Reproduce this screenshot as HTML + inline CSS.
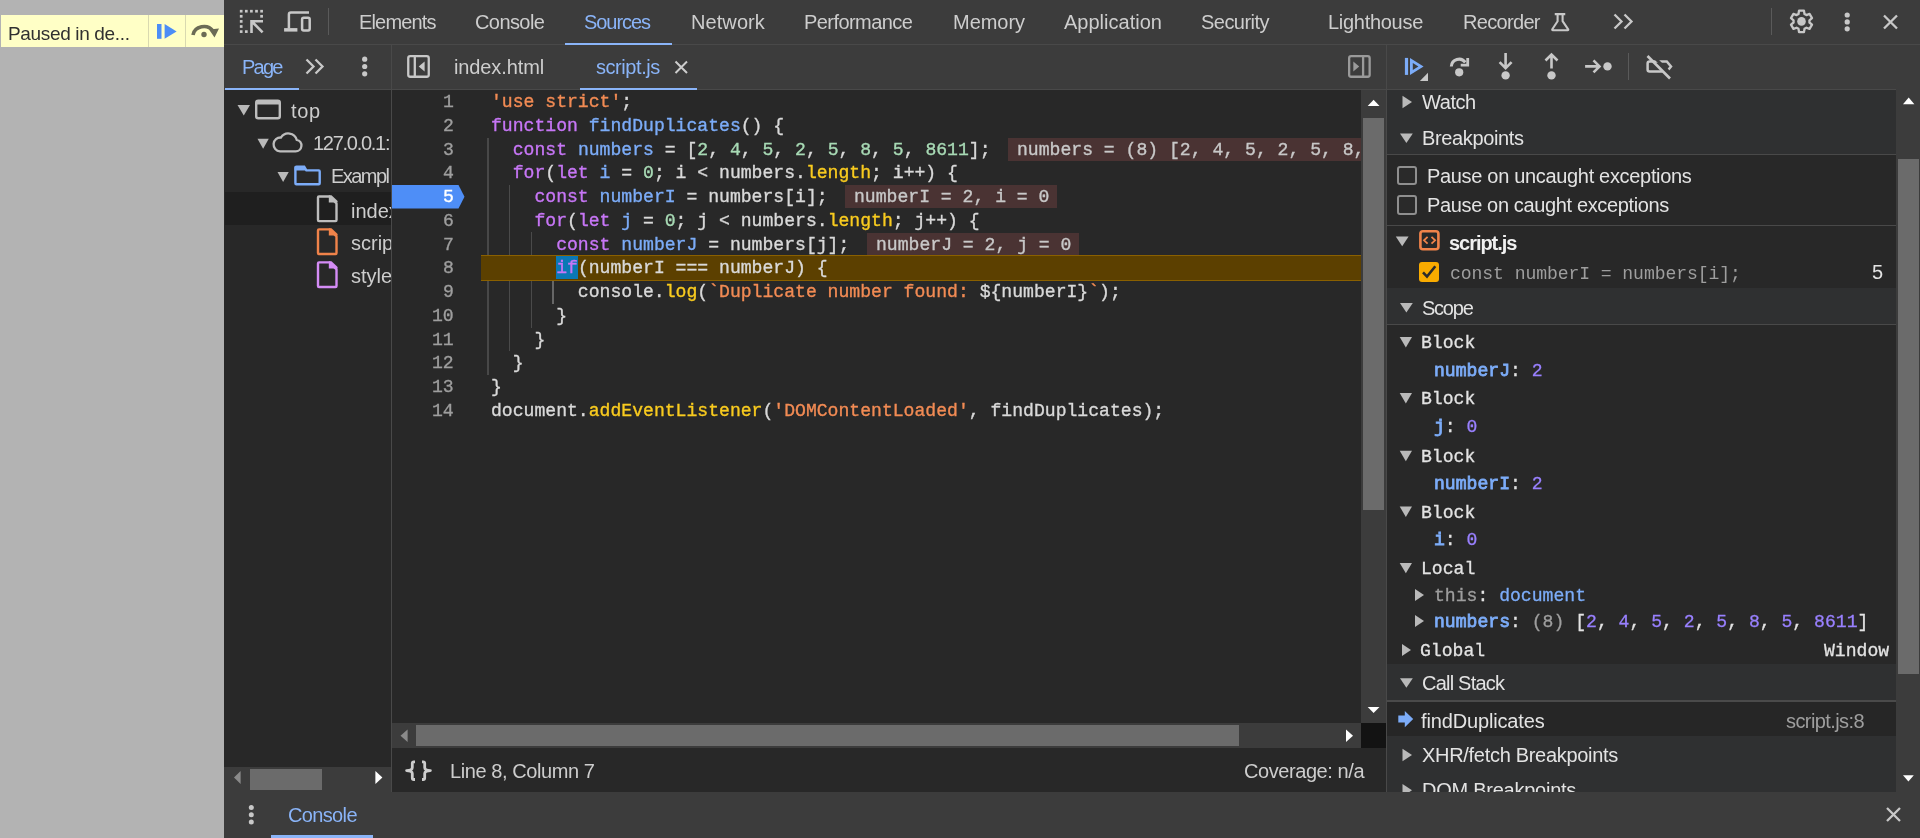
<!DOCTYPE html>
<html><head><meta charset="utf-8"><style>
html,body{margin:0;padding:0;width:1920px;height:838px;overflow:hidden;background:#b3b3b3;}
.b{position:absolute;}
.t{position:absolute;white-space:pre;will-change:transform;}
.code{-webkit-text-stroke:0.35px currentColor;font-family:"Liberation Mono",monospace;font-size:18.1px;line-height:23.75px;height:23.75px;padding-top:1.2px;box-sizing:border-box;}
svg{position:absolute;left:0;top:0;}
</style></head><body>
<div class="b" style="left:0px;top:0px;width:224px;height:838px;background:#b3b3b3;"></div>
<div class="b" style="left:1px;top:15px;width:223px;height:32px;background:#ffffc6;"></div>
<div class="b" style="left:148px;top:15px;width:1px;height:32px;background:#d9d9b0;"></div>
<div class="b" style="left:185px;top:15px;width:1px;height:32px;background:#d9d9b0;"></div>
<div class="t" style="left:8.10px;top:19.61px;font-size:19px;line-height:27px;color:#303030;letter-spacing:-0.346px;font-family:'Liberation Sans', sans-serif;">Paused in de...</div>
<div class="b" style="left:224px;top:0px;width:1696px;height:838px;background:#282828;"></div>
<div class="b" style="left:224px;top:0px;width:1696px;height:44px;background:#3c3c3c;"></div>
<div class="b" style="left:224px;top:44px;width:1696px;height:1px;background:#494949;"></div>
<div class="b" style="left:328px;top:8px;width:1px;height:27px;background:#5a5a5a;"></div>
<div class="t" style="left:358.50px;top:8.26px;font-size:20px;line-height:28px;color:#cdcdcd;letter-spacing:-0.839px;font-family:'Liberation Sans', sans-serif;">Elements</div>
<div class="t" style="left:474.70px;top:8.26px;font-size:20px;line-height:28px;color:#cdcdcd;letter-spacing:-0.579px;font-family:'Liberation Sans', sans-serif;">Console</div>
<div class="t" style="left:584.40px;top:8.26px;font-size:20px;line-height:28px;color:#8ab4f8;letter-spacing:-1.046px;font-family:'Liberation Sans', sans-serif;">Sources</div>
<div class="t" style="left:691.00px;top:8.26px;font-size:20px;line-height:28px;color:#cdcdcd;letter-spacing:0.083px;font-family:'Liberation Sans', sans-serif;">Network</div>
<div class="t" style="left:803.80px;top:8.26px;font-size:20px;line-height:28px;color:#cdcdcd;letter-spacing:-0.560px;font-family:'Liberation Sans', sans-serif;">Performance</div>
<div class="t" style="left:952.50px;top:8.26px;font-size:20px;line-height:28px;color:#cdcdcd;letter-spacing:-0.030px;font-family:'Liberation Sans', sans-serif;">Memory</div>
<div class="t" style="left:1064.40px;top:8.26px;font-size:20px;line-height:28px;color:#cdcdcd;letter-spacing:0.013px;font-family:'Liberation Sans', sans-serif;">Application</div>
<div class="t" style="left:1201.20px;top:8.26px;font-size:20px;line-height:28px;color:#cdcdcd;letter-spacing:-0.536px;font-family:'Liberation Sans', sans-serif;">Security</div>
<div class="t" style="left:1328.40px;top:8.26px;font-size:20px;line-height:28px;color:#cdcdcd;letter-spacing:-0.286px;font-family:'Liberation Sans', sans-serif;">Lighthouse</div>
<div class="t" style="left:1463.00px;top:8.26px;font-size:20px;line-height:28px;color:#cdcdcd;letter-spacing:-0.679px;font-family:'Liberation Sans', sans-serif;">Recorder</div>
<div class="b" style="left:565px;top:43px;width:107px;height:2px;background:#8ab4f8;"></div>
<div class="b" style="left:1771px;top:8px;width:1px;height:27px;background:#5a5a5a;"></div>
<div class="b" style="left:224px;top:45px;width:1696px;height:44px;background:#3c3c3c;"></div>
<div class="b" style="left:224px;top:89px;width:1696px;height:1px;background:#494949;"></div>
<div class="b" style="left:391px;top:45px;width:1px;height:747px;background:#494949;"></div>
<div class="b" style="left:1386px;top:45px;width:1px;height:747px;background:#494949;"></div>
<div class="t" style="left:241.50px;top:53.06px;font-size:20px;line-height:28px;color:#8ab4f8;letter-spacing:-1.750px;font-family:'Liberation Sans', sans-serif;">Page</div>
<div class="b" style="left:225px;top:88px;width:74px;height:2px;background:#8ab4f8;"></div>
<div class="t" style="left:454.40px;top:53.06px;font-size:20px;line-height:28px;color:#cdcdcd;letter-spacing:-0.114px;font-family:'Liberation Sans', sans-serif;">index.html</div>
<div class="t" style="left:596.25px;top:53.06px;font-size:20px;line-height:28px;color:#8ab4f8;letter-spacing:-0.438px;font-family:'Liberation Sans', sans-serif;">script.js</div>
<div class="b" style="left:580px;top:88px;width:117px;height:2px;background:#8ab4f8;"></div>
<div class="b" style="left:1628px;top:53px;width:1px;height:27px;background:#5a5a5a;"></div>
<div class="b" style="left:224px;top:90px;width:167px;height:677px;background:#282828;"></div>
<div class="b" style="left:225px;top:192px;width:166px;height:33px;background:#1f1f1f;"></div>
<div class="b" style="left:0;top:0;width:391px;height:767px;overflow:hidden">
<div class="t" style="left:291.00px;top:96.56px;font-size:20px;line-height:28px;color:#cdcdcd;letter-spacing:0.625px;font-family:'Liberation Sans', sans-serif;">top</div>
<div class="t" style="left:312.50px;top:129.06px;font-size:20px;line-height:28px;color:#cdcdcd;letter-spacing:-1.278px;font-family:'Liberation Sans', sans-serif;">127.0.0.1:</div>
<div class="t" style="left:331.00px;top:162.06px;font-size:20px;line-height:28px;color:#cdcdcd;letter-spacing:-1.550px;font-family:'Liberation Sans', sans-serif;">Exampl</div>
<div class="t" style="left:351.00px;top:196.56px;font-size:20px;line-height:28px;color:#cdcdcd;letter-spacing:0.000px;font-family:'Liberation Sans', sans-serif;">index.html</div>
<div class="t" style="left:351.00px;top:229.46px;font-size:20px;line-height:28px;color:#cdcdcd;letter-spacing:0.000px;font-family:'Liberation Sans', sans-serif;">script.js</div>
<div class="t" style="left:351.00px;top:262.46px;font-size:20px;line-height:28px;color:#cdcdcd;letter-spacing:0.000px;font-family:'Liberation Sans', sans-serif;">style.css</div>
</div>
<div class="b" style="left:224px;top:767px;width:167px;height:25px;background:#3c3c3c;"></div>
<div class="b" style="left:250px;top:769px;width:72px;height:21px;background:#6b6b6b;"></div>
<div class="b" style="left:392px;top:90px;width:969px;height:633px;background:#282828;"></div>
<svg width="1920" height="838" viewBox="0 0 1920 838"><path d="M392 185H458.5L464.5 196.8L458.5 208.6H392Z" fill="#4e8ef7"/></svg>
<div class="t code" style="left:442.63px;top:90.00px;width:10.87px;color:#9e9e9e">1</div>
<div class="t code" style="left:442.63px;top:113.75px;width:10.87px;color:#9e9e9e">2</div>
<div class="t code" style="left:442.63px;top:137.50px;width:10.87px;color:#9e9e9e">3</div>
<div class="t code" style="left:442.63px;top:161.25px;width:10.87px;color:#9e9e9e">4</div>
<div class="t code" style="left:442.63px;top:185.00px;width:10.87px;color:#ffffff">5</div>
<div class="t code" style="left:442.63px;top:208.75px;width:10.87px;color:#9e9e9e">6</div>
<div class="t code" style="left:442.63px;top:232.50px;width:10.87px;color:#9e9e9e">7</div>
<div class="t code" style="left:442.63px;top:256.25px;width:10.87px;color:#9e9e9e">8</div>
<div class="t code" style="left:442.63px;top:280.00px;width:10.87px;color:#9e9e9e">9</div>
<div class="t code" style="left:431.76px;top:303.75px;width:21.74px;color:#9e9e9e">10</div>
<div class="t code" style="left:431.76px;top:327.50px;width:21.74px;color:#9e9e9e">11</div>
<div class="t code" style="left:431.76px;top:351.25px;width:21.74px;color:#9e9e9e">12</div>
<div class="t code" style="left:431.76px;top:375.00px;width:21.74px;color:#9e9e9e">13</div>
<div class="t code" style="left:431.76px;top:398.75px;width:21.74px;color:#9e9e9e">14</div>
<div class="b" style="left:487px;top:138px;width:2px;height:237px;background:#484848;"></div>
<div class="b" style="left:509px;top:185px;width:1px;height:166px;background:#4a4a4a;"></div>
<div class="b" style="left:531px;top:232px;width:1px;height:96px;background:#4a4a4a;"></div>
<div class="b" style="left:552px;top:280px;width:2px;height:24px;background:#666666;"></div>
<div class="b" style="left:481px;top:255px;width:880px;height:26px;background:#5c4000;border-top:1px solid #8a6000;border-bottom:1px solid #8a6000;box-sizing:border-box"></div>
<div class="b" style="left:556px;top:256px;width:22px;height:23px;background:#0a78b5;"></div>
<div class="b" style="left:0;top:0;width:1361px;height:723px;overflow:hidden">
<div class="t code" style="left:491.3px;top:90.00px"><span style="color:#f28b54">&#x27;use strict&#x27;</span><span style="color:#d9d9d9">;</span></div>
<div class="t code" style="left:491.3px;top:113.75px"><span style="color:#c776f6">function</span><span style="color:#d9d9d9"> </span><span style="color:#7cacf8">findDuplicates</span><span style="color:#d9d9d9">() {</span></div>
<div class="t code" style="left:491.3px;top:137.50px"><span style="color:#d9d9d9">  </span><span style="color:#c776f6">const</span><span style="color:#d9d9d9"> </span><span style="color:#7cacf8">numbers</span><span style="color:#d9d9d9"> = [</span><span style="color:#a8dab5">2</span><span style="color:#d9d9d9">, </span><span style="color:#a8dab5">4</span><span style="color:#d9d9d9">, </span><span style="color:#a8dab5">5</span><span style="color:#d9d9d9">, </span><span style="color:#a8dab5">2</span><span style="color:#d9d9d9">, </span><span style="color:#a8dab5">5</span><span style="color:#d9d9d9">, </span><span style="color:#a8dab5">8</span><span style="color:#d9d9d9">, </span><span style="color:#a8dab5">5</span><span style="color:#d9d9d9">, </span><span style="color:#a8dab5">8611</span><span style="color:#d9d9d9">];</span></div>
<div class="t code" style="left:491.3px;top:161.25px"><span style="color:#d9d9d9">  </span><span style="color:#c776f6">for</span><span style="color:#d9d9d9">(</span><span style="color:#c776f6">let</span><span style="color:#d9d9d9"> </span><span style="color:#7cacf8">i</span><span style="color:#d9d9d9"> = </span><span style="color:#a8dab5">0</span><span style="color:#d9d9d9">; i &lt; numbers.</span><span style="color:#f9cb1f">length</span><span style="color:#d9d9d9">; i++) {</span></div>
<div class="t code" style="left:491.3px;top:185.00px"><span style="color:#d9d9d9">    </span><span style="color:#c776f6">const</span><span style="color:#d9d9d9"> </span><span style="color:#7cacf8">numberI</span><span style="color:#d9d9d9"> = numbers[i];</span></div>
<div class="t code" style="left:491.3px;top:208.75px"><span style="color:#d9d9d9">    </span><span style="color:#c776f6">for</span><span style="color:#d9d9d9">(</span><span style="color:#c776f6">let</span><span style="color:#d9d9d9"> </span><span style="color:#7cacf8">j</span><span style="color:#d9d9d9"> = </span><span style="color:#a8dab5">0</span><span style="color:#d9d9d9">; j &lt; numbers.</span><span style="color:#f9cb1f">length</span><span style="color:#d9d9d9">; j++) {</span></div>
<div class="t code" style="left:491.3px;top:232.50px"><span style="color:#d9d9d9">      </span><span style="color:#c776f6">const</span><span style="color:#d9d9d9"> </span><span style="color:#7cacf8">numberJ</span><span style="color:#d9d9d9"> = numbers[j];</span></div>
<div class="t code" style="left:491.3px;top:256.25px"><span style="color:#d9d9d9">      </span><span style="color:#c776f6">if</span><span style="color:#d9d9d9">(numberI === numberJ) {</span></div>
<div class="t code" style="left:491.3px;top:280.00px"><span style="color:#d9d9d9">        console.</span><span style="color:#f9cb1f">log</span><span style="color:#d9d9d9">(</span><span style="color:#f28b54">`Duplicate number found: </span><span style="color:#d9d9d9">${numberI}</span><span style="color:#f28b54">`</span><span style="color:#d9d9d9">);</span></div>
<div class="t code" style="left:491.3px;top:303.75px"><span style="color:#d9d9d9">      }</span></div>
<div class="t code" style="left:491.3px;top:327.50px"><span style="color:#d9d9d9">    }</span></div>
<div class="t code" style="left:491.3px;top:351.25px"><span style="color:#d9d9d9">  }</span></div>
<div class="t code" style="left:491.3px;top:375.00px"><span style="color:#d9d9d9">}</span></div>
<div class="t code" style="left:491.3px;top:398.75px"><span style="color:#d9d9d9">document.</span><span style="color:#f9cb1f">addEventListener</span><span style="color:#d9d9d9">(</span><span style="color:#f28b54">&#x27;DOMContentLoaded&#x27;</span><span style="color:#d9d9d9">, findDuplicates);</span></div>
<div class="b" style="left:1008.32px;top:138px;height:23px;width:461.67px;background:#4a3333"></div>
<div class="t code" style="left:1017.32px;top:137.50px;color:#c8c8c8">numbers = (8) [2, 4, 5, 2, 5, 8, 5, 8611]</div>
<div class="b" style="left:845.27px;top:185px;height:23px;width:211.66px;background:#4a3333"></div>
<div class="t code" style="left:854.27px;top:185.00px;color:#c8c8c8">numberI = 2, i = 0</div>
<div class="b" style="left:867.01px;top:233px;height:21.5px;width:211.66px;background:#4a3333"></div>
<div class="t code" style="left:876.01px;top:232.50px;color:#c8c8c8">numberJ = 2, j = 0</div>
</div>
<div class="b" style="left:1361px;top:90px;width:25px;height:633px;background:#3c3c3c;"></div>
<div class="b" style="left:1363px;top:118px;width:21px;height:392px;background:#6b6b6b;"></div>
<div class="b" style="left:392px;top:723px;width:969px;height:25px;background:#3c3c3c;"></div>
<div class="b" style="left:416px;top:725px;width:823px;height:21px;background:#6b6b6b;"></div>
<div class="b" style="left:1361px;top:723px;width:25px;height:25px;background:#131313;"></div>
<div class="b" style="left:392px;top:748px;width:994px;height:44px;background:#282828;"></div>
<div class="t" style="left:450.00px;top:757.06px;font-size:20px;line-height:28px;color:#cdcdcd;letter-spacing:-0.417px;font-family:'Liberation Sans', sans-serif;">Line 8, Column 7</div>
<div class="t" style="left:1243.50px;top:757.06px;font-size:20px;line-height:28px;color:#cdcdcd;letter-spacing:-0.427px;font-family:'Liberation Sans', sans-serif;">Coverage: n/a</div>
<div class="b" style="left:224px;top:792px;width:1696px;height:46px;background:#3c3c3c;"></div>
<div class="t" style="left:287.50px;top:800.66px;font-size:20px;line-height:28px;color:#8ab4f8;letter-spacing:-0.646px;font-family:'Liberation Sans', sans-serif;">Console</div>
<div class="b" style="left:271px;top:835px;width:102px;height:3px;background:#8ab4f8;"></div>
<div class="b" style="left:1387px;top:90px;width:509px;height:702px;background:#282828;"></div>
<div class="b" style="left:1387px;top:90px;width:509px;height:29px;background:#2f3031;"></div>
<div class="t" style="left:1422.00px;top:87.76px;font-size:20px;line-height:28px;color:#e3e3e3;letter-spacing:-0.425px;font-family:'Liberation Sans', sans-serif;">Watch</div>
<div class="b" style="left:1387px;top:119px;width:509px;height:35px;background:#2f3031;"></div>
<div class="t" style="left:1422.00px;top:124.06px;font-size:20px;line-height:28px;color:#e3e3e3;letter-spacing:-0.362px;font-family:'Liberation Sans', sans-serif;">Breakpoints</div>
<div class="b" style="left:1387px;top:154px;width:509px;height:1px;background:#494949;"></div>
<div class="b" style="left:1397px;top:165.6px;width:20px;height:19.5px;background:#2a2a2a;border:2px solid #8f8f8f;border-radius:3px;box-sizing:border-box"></div>
<div class="t" style="left:1426.70px;top:161.66px;font-size:20px;line-height:28px;color:#e3e3e3;letter-spacing:-0.322px;font-family:'Liberation Sans', sans-serif;">Pause on uncaught exceptions</div>
<div class="b" style="left:1397px;top:195px;width:20px;height:19.5px;background:#2a2a2a;border:2px solid #8f8f8f;border-radius:3px;box-sizing:border-box"></div>
<div class="t" style="left:1426.70px;top:191.06px;font-size:20px;line-height:28px;color:#e3e3e3;letter-spacing:-0.358px;font-family:'Liberation Sans', sans-serif;">Pause on caught exceptions</div>
<div class="b" style="left:1387px;top:225px;width:509px;height:1px;background:#494949;"></div>
<div class="t" style="left:1449.00px;top:229.06px;font-size:20px;line-height:28px;color:#f0f0f0;letter-spacing:-1.044px;font-family:'Liberation Sans', sans-serif;font-weight:bold;">script.js</div>
<div class="b" style="left:1419px;top:262px;width:20px;height:20px;background:#f9ab00;border-radius:3px"></div>
<div class="t" style="left:1450.00px;top:261.68px;font-size:18.1px;line-height:25px;color:#9e9e9e;letter-spacing:-0.086px;font-family:'Liberation Mono', monospace;">const numberI = numbers[i];</div>
<div class="t" style="left:1872.00px;top:258.06px;font-size:20px;line-height:28px;color:#e3e3e3;letter-spacing:0.000px;font-family:'Liberation Sans', sans-serif;">5</div>
<div class="b" style="left:1387px;top:288px;width:509px;height:36px;background:#2f3031;"></div>
<div class="t" style="left:1422.20px;top:293.56px;font-size:20px;line-height:28px;color:#e3e3e3;letter-spacing:-1.238px;font-family:'Liberation Sans', sans-serif;">Scope</div>
<div class="b" style="left:1387px;top:324px;width:509px;height:1px;background:#494949;"></div>
<div class="t" style="left:1420.50px;top:331.18px;font:18.1px/24px 'Liberation Mono',monospace;-webkit-text-stroke:0.3px currentColor"><span style="color:#e3e3e3;">Block</span></div>
<div class="t" style="left:1433.50px;top:359.18px;font:18.1px/24px 'Liberation Mono',monospace;-webkit-text-stroke:0.3px currentColor"><span style="color:#7cacf8;-webkit-text-stroke:0.8px currentColor;">numberJ</span><span style="color:#e3e3e3;">: </span><span style="color:#9980ff;">2</span></div>
<div class="t" style="left:1420.50px;top:387.18px;font:18.1px/24px 'Liberation Mono',monospace;-webkit-text-stroke:0.3px currentColor"><span style="color:#e3e3e3;">Block</span></div>
<div class="t" style="left:1433.50px;top:415.18px;font:18.1px/24px 'Liberation Mono',monospace;-webkit-text-stroke:0.3px currentColor"><span style="color:#7cacf8;-webkit-text-stroke:0.8px currentColor;">j</span><span style="color:#e3e3e3;">: </span><span style="color:#9980ff;">0</span></div>
<div class="t" style="left:1420.50px;top:444.98px;font:18.1px/24px 'Liberation Mono',monospace;-webkit-text-stroke:0.3px currentColor"><span style="color:#e3e3e3;">Block</span></div>
<div class="t" style="left:1433.50px;top:472.38px;font:18.1px/24px 'Liberation Mono',monospace;-webkit-text-stroke:0.3px currentColor"><span style="color:#7cacf8;-webkit-text-stroke:0.8px currentColor;">numberI</span><span style="color:#e3e3e3;">: </span><span style="color:#9980ff;">2</span></div>
<div class="t" style="left:1420.50px;top:500.68px;font:18.1px/24px 'Liberation Mono',monospace;-webkit-text-stroke:0.3px currentColor"><span style="color:#e3e3e3;">Block</span></div>
<div class="t" style="left:1433.50px;top:528.08px;font:18.1px/24px 'Liberation Mono',monospace;-webkit-text-stroke:0.3px currentColor"><span style="color:#7cacf8;-webkit-text-stroke:0.8px currentColor;">i</span><span style="color:#e3e3e3;">: </span><span style="color:#9980ff;">0</span></div>
<div class="t" style="left:1420.50px;top:557.08px;font:18.1px/24px 'Liberation Mono',monospace;-webkit-text-stroke:0.3px currentColor"><span style="color:#e3e3e3;">Local</span></div>
<div class="t" style="left:1433.50px;top:584.18px;font:18.1px/24px 'Liberation Mono',monospace;-webkit-text-stroke:0.3px currentColor"><span style="color:#9e9e9e;">this</span><span style="color:#e3e3e3;">: </span><span style="color:#7cacf8;">document</span></div>
<div class="t" style="left:1433.50px;top:609.88px;font:18.1px/24px 'Liberation Mono',monospace;-webkit-text-stroke:0.3px currentColor"><span style="color:#7cacf8;-webkit-text-stroke:0.8px currentColor;">numbers</span><span style="color:#e3e3e3;">: </span><span style="color:#9e9e9e;">(8) </span><span style="color:#e3e3e3;">[</span><span style="color:#9980ff;">2</span><span style="color:#e3e3e3;">, </span><span style="color:#9980ff;">4</span><span style="color:#e3e3e3;">, </span><span style="color:#9980ff;">5</span><span style="color:#e3e3e3;">, </span><span style="color:#9980ff;">2</span><span style="color:#e3e3e3;">, </span><span style="color:#9980ff;">5</span><span style="color:#e3e3e3;">, </span><span style="color:#9980ff;">8</span><span style="color:#e3e3e3;">, </span><span style="color:#9980ff;">5</span><span style="color:#e3e3e3;">, </span><span style="color:#9980ff;">8611</span><span style="color:#e3e3e3;">]</span></div>
<div class="t" style="left:1420.30px;top:638.88px;font:18.1px/24px 'Liberation Mono',monospace;-webkit-text-stroke:0.3px currentColor"><span style="color:#e3e3e3;">Global</span></div>
<div class="t" style="left:1823.50px;top:638.88px;font:18.1px/24px 'Liberation Mono',monospace;-webkit-text-stroke:0.3px currentColor"><span style="color:#e3e3e3;">Window</span></div>
<div class="b" style="left:1387px;top:664px;width:509px;height:36px;background:#2f3031;"></div>
<div class="t" style="left:1421.90px;top:668.86px;font-size:20px;line-height:28px;color:#e3e3e3;letter-spacing:-0.781px;font-family:'Liberation Sans', sans-serif;">Call Stack</div>
<div class="b" style="left:1387px;top:700px;width:509px;height:2px;background:#4a4a4a;"></div>
<div class="b" style="left:1387px;top:702px;width:509px;height:34px;background:#262626;"></div>
<div class="t" style="left:1420.80px;top:706.56px;font-size:20px;line-height:28px;color:#e3e3e3;letter-spacing:-0.148px;font-family:'Liberation Sans', sans-serif;">findDuplicates</div>
<div class="t" style="left:1786.40px;top:706.56px;font-size:20px;line-height:28px;color:#9e9e9e;letter-spacing:-0.590px;font-family:'Liberation Sans', sans-serif;">script.js:8</div>
<div class="b" style="left:1387px;top:736px;width:509px;height:36px;background:#2f3031;"></div>
<div class="t" style="left:1421.60px;top:740.86px;font-size:20px;line-height:28px;color:#e3e3e3;letter-spacing:-0.299px;font-family:'Liberation Sans', sans-serif;">XHR/fetch Breakpoints</div>
<div class="b" style="left:0;top:0;width:1896px;height:792px;overflow:hidden">
<div class="b" style="left:1387px;top:772px;width:509px;height:36px;background:#2f3031;"></div>
<div class="t" style="left:1421.60px;top:776.06px;font-size:20px;line-height:28px;color:#e3e3e3;letter-spacing:-0.248px;font-family:'Liberation Sans', sans-serif;">DOM Breakpoints</div>
</div>
<div class="b" style="left:1896px;top:89px;width:24px;height:703px;background:#3c3c3c;"></div>
<div class="b" style="left:1898px;top:159px;width:21px;height:515px;background:#6b6b6b;"></div>
<svg width="1920" height="838" viewBox="0 0 1920 838"><defs><clipPath id="cl"><rect x="0" y="0" width="1920" height="792"/></clipPath></defs>
<rect x="157" y="24" width="4.5" height="14.8" fill="#4c8df6"/><path d="M164.6 24 L176.6 31.4 L164.6 38.8 Z" fill="#4c8df6"/>
<path d="M193 35 A11 10 0 0 1 213 31" fill="none" stroke="#6b6b55" stroke-width="3.6"/><path d="M209 29.5 L219 28.5 L214.5 37.5 Z" fill="#6b6b55"/><circle cx="204" cy="34.5" r="2.7" fill="#6b6b55"/>
<g fill="#c8c8c8"><rect x="239.85" y="9.85" width="2.7" height="2.7"/><rect x="244.95000000000002" y="9.85" width="2.7" height="2.7"/><rect x="250.05" y="9.85" width="2.7" height="2.7"/><rect x="255.15" y="9.85" width="2.7" height="2.7"/><rect x="260.25" y="9.85" width="2.7" height="2.7"/><rect x="239.85" y="14.950000000000001" width="2.7" height="2.7"/><rect x="239.85" y="20.049999999999997" width="2.7" height="2.7"/><rect x="239.85" y="25.15" width="2.7" height="2.7"/><rect x="239.85" y="30.25" width="2.7" height="2.7"/><rect x="260.25" y="14.95" width="2.7" height="2.7"/><rect x="244.95" y="30.25" width="2.7" height="2.7"/></g><g fill="none" stroke="#c8c8c8" stroke-width="2.6"><path d="M251.5 33V21.2H263M251.8 21.5L262.6 32.3"/></g>
<g fill="none" stroke="#c8c8c8" stroke-width="2.5"><path d="M288.9 28.5V14.6a2 2 0 0 1 2-2H309"/><rect x="302.1" y="17.8" width="7.6" height="12.6" rx="1.6"/></g><rect x="284.1" y="28.1" width="13.3" height="3.5" fill="#c8c8c8"/>
<path d="M1554.75 14.1H1565.25M1557.6 15V21.2L1552.3 29.3a0.6 0.6 0 0 0 0.5 0.9H1567.7a0.6 0.6 0 0 0 0.5-0.9L1562.6 21.2V15" fill="none" stroke="#c8c8c8" stroke-width="2.1" stroke-linejoin="round"/>
<path d="M1614.5 14.5l7 7-7 7M1624.5 14.5l7 7-7 7" fill="none" stroke="#c8c8c8" stroke-width="2.3"/>
<path d="M1798.50 13.98 L1799.03 10.68 L1803.97 10.68 L1804.50 13.98 L1806.43 15.10 L1809.54 13.90 L1812.02 18.18 L1809.42 20.29 L1809.42 22.51 L1812.02 24.62 L1809.54 28.90 L1806.43 27.70 L1804.50 28.82 L1803.97 32.12 L1799.03 32.12 L1798.50 28.82 L1796.57 27.70 L1793.46 28.90 L1790.98 24.62 L1793.58 22.51 L1793.58 20.29 L1790.98 18.18 L1793.46 13.90 L1796.57 15.10Z" fill="none" stroke="#c8c8c8" stroke-width="2.3" stroke-linejoin="round"/><circle cx="1801.5" cy="21.4" r="4.3" fill="#c8c8c8"/>
<circle cx="1847.2" cy="15" r="2.6" fill="#c8c8c8"/><circle cx="1847.2" cy="21.9" r="2.6" fill="#c8c8c8"/><circle cx="1847.2" cy="28.8" r="2.6" fill="#c8c8c8"/>
<path d="M1884 15.5L1897 28.5M1897 15.5L1884 28.5" stroke="#c8c8c8" stroke-width="2.3"/>
<path d="M306.5 59.5l7 7-7 7M315.5 59.5l7 7-7 7" fill="none" stroke="#c8c8c8" stroke-width="2.3"/>
<circle cx="364.7" cy="59.2" r="2.6" fill="#c8c8c8"/><circle cx="364.7" cy="66.5" r="2.6" fill="#c8c8c8"/><circle cx="364.7" cy="73.8" r="2.6" fill="#c8c8c8"/>
<rect x="408.25" y="56.15" width="20.5" height="20.6" rx="2" fill="none" stroke="#c8c8c8" stroke-width="2.3"/><path d="M414.8 56v21" stroke="#c8c8c8" stroke-width="2.3"/><path d="M418.7 66.5L424.6 61.4V71.6Z" fill="#c8c8c8"/>
<path d="M675.5 61.5L687 73M687 61.5L675.5 73" stroke="#cdcdcd" stroke-width="2"/>
<rect x="1349.15" y="56.15" width="20.5" height="20.6" rx="2" fill="none" stroke="#9a9a9a" stroke-width="2.3"/><path d="M1363.1 56v21" stroke="#9a9a9a" stroke-width="2.3"/><path d="M1359.2 66.5L1353.3 61.4V71.6Z" fill="#9a9a9a"/>
<rect x="1404.9" y="57.9" width="3.2" height="17" fill="#7cacf8"/><path d="M1410 57.9L1423.6 66.4L1410 74.9ZM1412.8 62.9V70L1418.4 66.45Z" fill="#7cacf8" fill-rule="evenodd"/><path d="M1428 72.8V81H1419.9Z" fill="#c8c8c8"/>
<path d="M1451.3 66.5A7.8 7.8 0 0 1 1465.3 62.3" fill="none" stroke="#c8c8c8" stroke-width="3"/><path d="M1466.3 58H1469.1V66.5H1460.7V63.8H1466.3Z" fill="#c8c8c8"/><circle cx="1459.2" cy="72.3" r="4.1" fill="#c8c8c8"/>
<path d="M1505.6 53.1V67.5M1499.6 62.2L1505.6 68.2L1511.6 62.2" fill="none" stroke="#c8c8c8" stroke-width="2.6"/><circle cx="1505.6" cy="75.4" r="4.2" fill="#c8c8c8"/>
<path d="M1551.5 68.6V54.2M1545.5 60.5L1551.5 54.5L1557.5 60.5" fill="none" stroke="#c8c8c8" stroke-width="2.6"/><circle cx="1551.5" cy="75.4" r="4.2" fill="#c8c8c8"/>
<path d="M1585.1 66.4H1599.5M1593.5 60.4L1599.5 66.4L1593.5 72.4" fill="none" stroke="#c8c8c8" stroke-width="2.6"/><circle cx="1607.5" cy="66.4" r="4.2" fill="#c8c8c8"/>
<path d="M1662.7 71.6H1649.6a2 2 0 0 1-2-2V63.5a2 2 0 0 1 2-2H1666.8L1671 66.5L1667.7 70.5" fill="none" stroke="#c8c8c8" stroke-width="2.5"/><path d="M1650.5 53.5L1673 76" stroke="#3c3c3c" stroke-width="3"/><path d="M1647.5 56L1670 78.5" stroke="#c8c8c8" stroke-width="2.6"/>
<path d="M237.5 105H250.0L243.75 115.5Z" fill="#b9b9b9"/>
<rect x="256.2" y="100.7" width="23.6" height="17.6" rx="2" fill="none" stroke="#bdbdbd" stroke-width="2.4"/><rect x="256" y="100.5" width="24" height="4" fill="#bdbdbd"/>
<path d="M257.5 138.75H268.75L263.125 148.75Z" fill="#b9b9b9"/>
<path d="M280 151.3h15.5a5.8 5.8 0 0 0 1.2-11.5A8.7 8.7 0 0 0 281 137.5A6.9 6.9 0 0 0 280 151.3z" fill="none" stroke="#bdbdbd" stroke-width="2.3"/>
<path d="M277.5 172H288.75L283.125 182Z" fill="#b9b9b9"/>
<path d="M295.4 168.8v14.5a1 1 0 0 0 1 1h22.3a1 1 0 0 0 1-1V171.4a1 1 0 0 0-1-1H306.4l-2.2-3.6h-7.8a1 1 0 0 0-1 1z" fill="none" stroke="#7cacf8" stroke-width="2.4"/><path d="M294.6 166.6h9.8l2.4 3.8h-12.2z" fill="#7cacf8"/>
<path d="M319 196.5h10.5l7 7v16.6a1 1 0 0 1-1 1h-16.5a1 1 0 0 1-1-1v-22.6a1 1 0 0 1 1-1z" fill="none" stroke="#bdbdbd" stroke-width="2.4" stroke-linejoin="round"/><path d="M328.8 195.3h2.7l6.1 5.7v1.5h-8.8z" fill="#bdbdbd"/>
<path d="M319 229.39999999999998h10.5l7 7v16.6a1 1 0 0 1-1 1h-16.5a1 1 0 0 1-1-1v-22.6a1 1 0 0 1 1-1z" fill="none" stroke="#f0834a" stroke-width="2.4" stroke-linejoin="round"/><path d="M328.8 228.2h2.7l6.1 5.7v1.5h-8.8z" fill="#f0834a"/>
<path d="M319 262.4h10.5l7 7v16.6a1 1 0 0 1-1 1h-16.5a1 1 0 0 1-1-1v-22.6a1 1 0 0 1 1-1z" fill="none" stroke="#d48cf5" stroke-width="2.4" stroke-linejoin="round"/><path d="M328.8 261.2h2.7l6.1 5.7v1.5h-8.8z" fill="#d48cf5"/>
<path d="M240.6 771v13L234 777.5z" fill="#8a8a8a"/>
<path d="M375.4 771v13l7 -6.5z" fill="#ffffff"/>
<path d="M1367.7 106L1373.6 99.7L1379.5 106Z" fill="#ffffff"/>
<path d="M1367.7 707L1373.6 713L1379.5 707Z" fill="#ffffff"/>
<path d="M407.6 729.5v12.5L400.5 735.75z" fill="#8a8a8a"/>
<path d="M1346 729.5v12.5l7-6.25z" fill="#ffffff"/>
<path d="M415 761.8H413.8Q412.3 761.8 412.3 763.3V767.6Q412.3 770.6 406.6 770.6Q412.3 770.6 412.3 773.6V778Q412.3 779.5 413.8 779.5H415M422 761.8H423.2Q424.7 761.8 424.7 763.3V767.6Q424.7 770.6 430.4 770.6Q424.7 770.6 424.7 773.6V778Q424.7 779.5 423.2 779.5H422" fill="none" stroke="#cdcdcd" stroke-width="2.8" stroke-linejoin="round"/>
<circle cx="251.3" cy="807.5" r="2.5" fill="#c8c8c8"/><circle cx="251.3" cy="814.7" r="2.5" fill="#c8c8c8"/><circle cx="251.3" cy="821.9" r="2.5" fill="#c8c8c8"/>
<path d="M1887 808L1900 821M1900 808L1887 821" stroke="#c8c8c8" stroke-width="2.3"/>
<path d="M1402.5 95.7L1412.0 101.95L1402.5 108.2Z" fill="#b9b9b9"/>
<path d="M1400 133.5H1412.8L1406.4 143.0Z" fill="#b9b9b9"/>
<path d="M1395.8 236.6H1408.6L1402.2 246.29999999999998Z" fill="#b9b9b9"/>
<rect x="1420.4" y="231.3" width="18" height="18" rx="2.5" fill="none" stroke="#f0834a" stroke-width="2.6"/><path d="M1427.6 236.9L1424 240.3L1427.6 243.7M1431.5 236.9L1435.1 240.3L1431.5 243.7" fill="none" stroke="#f0834a" stroke-width="1.8"/>
<path d="M1423 272.3L1427 276.6L1435.3 266.3" fill="none" stroke="#2b2b2b" stroke-width="2.6"/>
<path d="M1400 303.0H1412.8L1406.4 312.5Z" fill="#b9b9b9"/>
<path d="M1399.7 337H1412.0L1405.8500000000001 347.4Z" fill="#b9b9b9"/>
<path d="M1399.7 393H1412.0L1405.8500000000001 403.4Z" fill="#b9b9b9"/>
<path d="M1399.7 450.8H1412.0L1405.8500000000001 461.2Z" fill="#b9b9b9"/>
<path d="M1399.7 506.5H1412.0L1405.8500000000001 516.9Z" fill="#b9b9b9"/>
<path d="M1399.7 562.9H1412.0L1405.8500000000001 573.3Z" fill="#b9b9b9"/>
<path d="M1415 589L1424 595.0L1415 601Z" fill="#b9b9b9"/>
<path d="M1415 615L1424 621.0L1415 627Z" fill="#b9b9b9"/>
<path d="M1402 644L1411 650.0L1402 656Z" fill="#b9b9b9"/>
<path d="M1400 678.3H1412.8L1406.4 687.8Z" fill="#b9b9b9"/>
<path d="M1398.3 715.5h6.5V711l8.4 8.1-8.4 8.1v-4.6h-6.5z" fill="#7cacf8"/>
<path d="M1402.5 748.8L1412.0 755.05L1402.5 761.3Z" fill="#b9b9b9"/>
<g clip-path="url(#cl)"><path d="M1402.5 784L1412.0 790.25L1402.5 796.5Z" fill="#b9b9b9"/></g>
<path d="M1903 104.2L1908.7 97.6L1914.4 104.2Z" fill="#ffffff"/>
<path d="M1903 775.3L1908.4 781.5L1913.8 775.3Z" fill="#ffffff"/>
</svg>
</body></html>
